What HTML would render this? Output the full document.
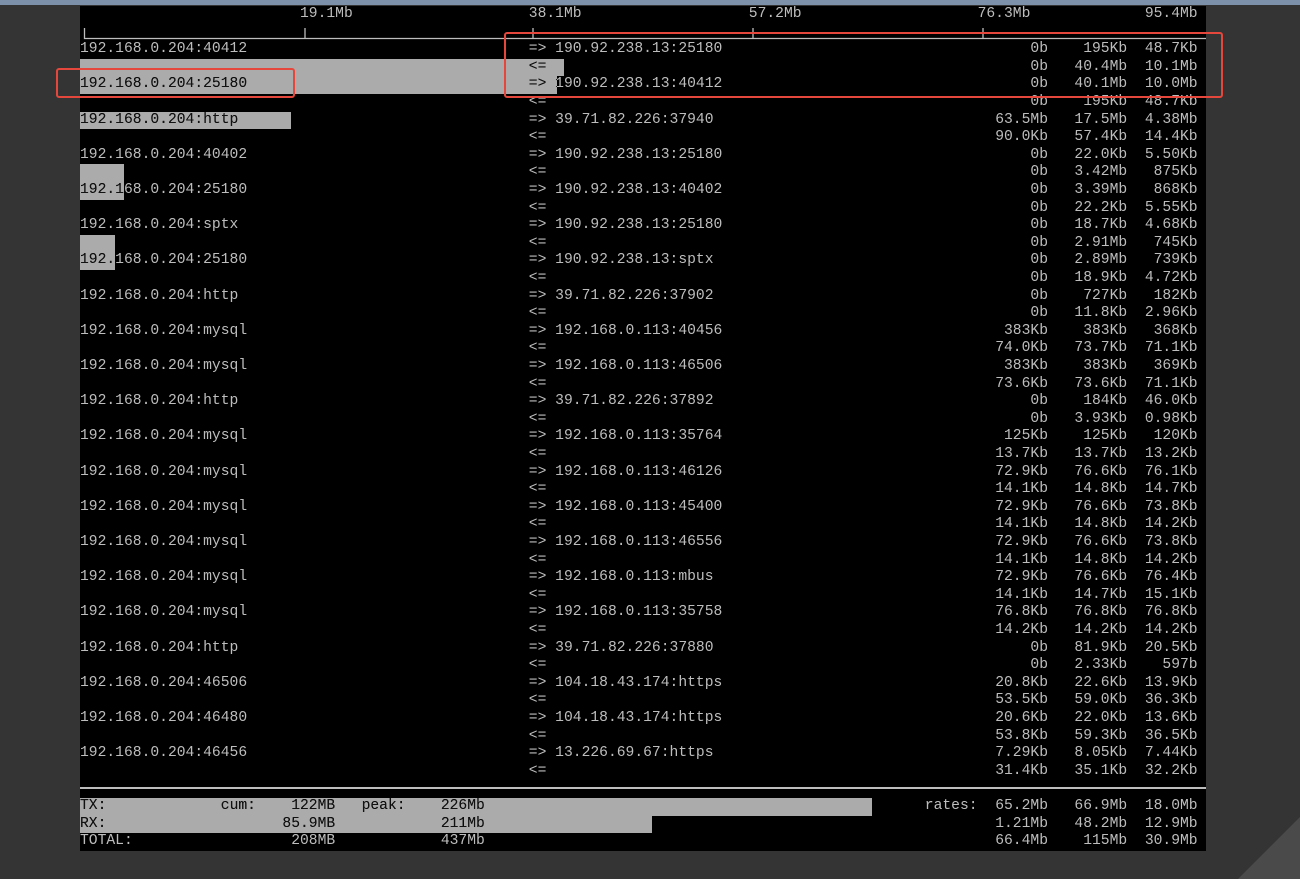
<!DOCTYPE html>
<html><head><meta charset="utf-8">
<style>
html,body{margin:0;padding:0;}
body{width:1300px;height:879px;background:#343434;position:relative;overflow:hidden;font-family:"Liberation Mono","DejaVu Sans Mono",monospace;}
#top{position:absolute;left:0;top:0;width:1300px;height:5px;background:#7d91ab;}
#t{position:absolute;left:80px;top:6px;width:1126.4px;height:845px;background:#000;isolation:isolate;overflow:hidden;}
.l{position:absolute;left:0;width:1126.4px;height:17.6px;font-size:14.67px;line-height:17.6px;color:#bdbdbd;white-space:pre;}
.l span{position:absolute;top:0;}
.h{left:0}
.a{left:448.8px}
.c1{right:158.4px}
.c2{right:79.2px}
.c3{right:8.8px}
.bar{position:absolute;left:0;height:17.6px;background:#ababab;mix-blend-mode:difference;}
.box{position:absolute;border:2px solid #e5473d;border-radius:3px;}
</style></head><body>
<div id="top"></div>
<svg style="position:absolute;right:0;bottom:0" width="70" height="70"><polygon points="70,8 70,70 8,70" fill="#4a4a4a"/></svg>
<div id="t">
<div class="l" style="top:0px"><span style="left:220px">19.1Mb</span><span style="left:448.8px">38.1Mb</span><span style="left:668.8px">57.2Mb</span><span style="left:897.6px">76.3Mb</span><span class="c3">95.4Mb</span></div>
<svg style="position:absolute;left:0;top:17.6px" width="1127" height="18"><path d="M4.5 4V14.5H1126 M225 4V14.5 M453 4V14.5 M673 4V14.5 M903 4V14.5" stroke="#bdbdbd" stroke-width="1.3" fill="none"/></svg>

<div class="l" style="top:35.2px"><span class="h">192.168.0.204:40412</span><span class="a">=&gt; 190.92.238.13:25180</span><span class="c1">0b</span><span class="c2">195Kb</span><span class="c3">48.7Kb</span></div>
<div class="l" style="top:52.8px"><span class="a">&lt;=</span><span class="c1">0b</span><span class="c2">40.4Mb</span><span class="c3">10.1Mb</span></div>
<div class="l" style="top:70.4px"><span class="h">192.168.0.204:25180</span><span class="a">=&gt; 190.92.238.13:40412</span><span class="c1">0b</span><span class="c2">40.1Mb</span><span class="c3">10.0Mb</span></div>
<div class="l" style="top:88px"><span class="a">&lt;=</span><span class="c1">0b</span><span class="c2">195Kb</span><span class="c3">48.7Kb</span></div>
<div class="l" style="top:105.6px"><span class="h">192.168.0.204:http</span><span class="a">=&gt; 39.71.82.226:37940</span><span class="c1">63.5Mb</span><span class="c2">17.5Mb</span><span class="c3">4.38Mb</span></div>
<div class="l" style="top:123.2px"><span class="a">&lt;=</span><span class="c1">90.0Kb</span><span class="c2">57.4Kb</span><span class="c3">14.4Kb</span></div>
<div class="l" style="top:140.8px"><span class="h">192.168.0.204:40402</span><span class="a">=&gt; 190.92.238.13:25180</span><span class="c1">0b</span><span class="c2">22.0Kb</span><span class="c3">5.50Kb</span></div>
<div class="l" style="top:158.4px"><span class="a">&lt;=</span><span class="c1">0b</span><span class="c2">3.42Mb</span><span class="c3">875Kb</span></div>
<div class="l" style="top:176px"><span class="h">192.168.0.204:25180</span><span class="a">=&gt; 190.92.238.13:40402</span><span class="c1">0b</span><span class="c2">3.39Mb</span><span class="c3">868Kb</span></div>
<div class="l" style="top:193.6px"><span class="a">&lt;=</span><span class="c1">0b</span><span class="c2">22.2Kb</span><span class="c3">5.55Kb</span></div>
<div class="l" style="top:211.2px"><span class="h">192.168.0.204:sptx</span><span class="a">=&gt; 190.92.238.13:25180</span><span class="c1">0b</span><span class="c2">18.7Kb</span><span class="c3">4.68Kb</span></div>
<div class="l" style="top:228.8px"><span class="a">&lt;=</span><span class="c1">0b</span><span class="c2">2.91Mb</span><span class="c3">745Kb</span></div>
<div class="l" style="top:246.4px"><span class="h">192.168.0.204:25180</span><span class="a">=&gt; 190.92.238.13:sptx</span><span class="c1">0b</span><span class="c2">2.89Mb</span><span class="c3">739Kb</span></div>
<div class="l" style="top:264px"><span class="a">&lt;=</span><span class="c1">0b</span><span class="c2">18.9Kb</span><span class="c3">4.72Kb</span></div>
<div class="l" style="top:281.6px"><span class="h">192.168.0.204:http</span><span class="a">=&gt; 39.71.82.226:37902</span><span class="c1">0b</span><span class="c2">727Kb</span><span class="c3">182Kb</span></div>
<div class="l" style="top:299.2px"><span class="a">&lt;=</span><span class="c1">0b</span><span class="c2">11.8Kb</span><span class="c3">2.96Kb</span></div>
<div class="l" style="top:316.8px"><span class="h">192.168.0.204:mysql</span><span class="a">=&gt; 192.168.0.113:40456</span><span class="c1">383Kb</span><span class="c2">383Kb</span><span class="c3">368Kb</span></div>
<div class="l" style="top:334.4px"><span class="a">&lt;=</span><span class="c1">74.0Kb</span><span class="c2">73.7Kb</span><span class="c3">71.1Kb</span></div>
<div class="l" style="top:352px"><span class="h">192.168.0.204:mysql</span><span class="a">=&gt; 192.168.0.113:46506</span><span class="c1">383Kb</span><span class="c2">383Kb</span><span class="c3">369Kb</span></div>
<div class="l" style="top:369.6px"><span class="a">&lt;=</span><span class="c1">73.6Kb</span><span class="c2">73.6Kb</span><span class="c3">71.1Kb</span></div>
<div class="l" style="top:387.2px"><span class="h">192.168.0.204:http</span><span class="a">=&gt; 39.71.82.226:37892</span><span class="c1">0b</span><span class="c2">184Kb</span><span class="c3">46.0Kb</span></div>
<div class="l" style="top:404.8px"><span class="a">&lt;=</span><span class="c1">0b</span><span class="c2">3.93Kb</span><span class="c3">0.98Kb</span></div>
<div class="l" style="top:422.4px"><span class="h">192.168.0.204:mysql</span><span class="a">=&gt; 192.168.0.113:35764</span><span class="c1">125Kb</span><span class="c2">125Kb</span><span class="c3">120Kb</span></div>
<div class="l" style="top:440px"><span class="a">&lt;=</span><span class="c1">13.7Kb</span><span class="c2">13.7Kb</span><span class="c3">13.2Kb</span></div>
<div class="l" style="top:457.6px"><span class="h">192.168.0.204:mysql</span><span class="a">=&gt; 192.168.0.113:46126</span><span class="c1">72.9Kb</span><span class="c2">76.6Kb</span><span class="c3">76.1Kb</span></div>
<div class="l" style="top:475.2px"><span class="a">&lt;=</span><span class="c1">14.1Kb</span><span class="c2">14.8Kb</span><span class="c3">14.7Kb</span></div>
<div class="l" style="top:492.8px"><span class="h">192.168.0.204:mysql</span><span class="a">=&gt; 192.168.0.113:45400</span><span class="c1">72.9Kb</span><span class="c2">76.6Kb</span><span class="c3">73.8Kb</span></div>
<div class="l" style="top:510.4px"><span class="a">&lt;=</span><span class="c1">14.1Kb</span><span class="c2">14.8Kb</span><span class="c3">14.2Kb</span></div>
<div class="l" style="top:528px"><span class="h">192.168.0.204:mysql</span><span class="a">=&gt; 192.168.0.113:46556</span><span class="c1">72.9Kb</span><span class="c2">76.6Kb</span><span class="c3">73.8Kb</span></div>
<div class="l" style="top:545.6px"><span class="a">&lt;=</span><span class="c1">14.1Kb</span><span class="c2">14.8Kb</span><span class="c3">14.2Kb</span></div>
<div class="l" style="top:563.2px"><span class="h">192.168.0.204:mysql</span><span class="a">=&gt; 192.168.0.113:mbus</span><span class="c1">72.9Kb</span><span class="c2">76.6Kb</span><span class="c3">76.4Kb</span></div>
<div class="l" style="top:580.8px"><span class="a">&lt;=</span><span class="c1">14.1Kb</span><span class="c2">14.7Kb</span><span class="c3">15.1Kb</span></div>
<div class="l" style="top:598.4px"><span class="h">192.168.0.204:mysql</span><span class="a">=&gt; 192.168.0.113:35758</span><span class="c1">76.8Kb</span><span class="c2">76.8Kb</span><span class="c3">76.8Kb</span></div>
<div class="l" style="top:616px"><span class="a">&lt;=</span><span class="c1">14.2Kb</span><span class="c2">14.2Kb</span><span class="c3">14.2Kb</span></div>
<div class="l" style="top:633.6px"><span class="h">192.168.0.204:http</span><span class="a">=&gt; 39.71.82.226:37880</span><span class="c1">0b</span><span class="c2">81.9Kb</span><span class="c3">20.5Kb</span></div>
<div class="l" style="top:651.2px"><span class="a">&lt;=</span><span class="c1">0b</span><span class="c2">2.33Kb</span><span class="c3">597b</span></div>
<div class="l" style="top:668.8px"><span class="h">192.168.0.204:46506</span><span class="a">=&gt; 104.18.43.174:https</span><span class="c1">20.8Kb</span><span class="c2">22.6Kb</span><span class="c3">13.9Kb</span></div>
<div class="l" style="top:686.4px"><span class="a">&lt;=</span><span class="c1">53.5Kb</span><span class="c2">59.0Kb</span><span class="c3">36.3Kb</span></div>
<div class="l" style="top:704px"><span class="h">192.168.0.204:46480</span><span class="a">=&gt; 104.18.43.174:https</span><span class="c1">20.6Kb</span><span class="c2">22.0Kb</span><span class="c3">13.6Kb</span></div>
<div class="l" style="top:721.6px"><span class="a">&lt;=</span><span class="c1">53.8Kb</span><span class="c2">59.3Kb</span><span class="c3">36.5Kb</span></div>
<div class="l" style="top:739.2px"><span class="h">192.168.0.204:46456</span><span class="a">=&gt; 13.226.69.67:https</span><span class="c1">7.29Kb</span><span class="c2">8.05Kb</span><span class="c3">7.44Kb</span></div>
<div class="l" style="top:756.8px"><span class="a">&lt;=</span><span class="c1">31.4Kb</span><span class="c2">35.1Kb</span><span class="c3">32.2Kb</span></div>

<div style="position:absolute;left:0;top:781px;width:1126.4px;height:1.5px;background:#bdbdbd"></div>

<div class="l" style="top:792px"><span class="h">TX:</span><span style="left:140.8px">cum:</span><span style="right:871.2px">122MB</span><span style="left:281.6px">peak:</span><span style="right:721.6px">226Mb</span><span style="left:844.8px">rates:</span><span class="c1">65.2Mb</span><span class="c2">66.9Mb</span><span class="c3">18.0Mb</span></div>
<div class="l" style="top:809.6px"><span class="h">RX:</span><span style="right:871.2px">85.9MB</span><span style="right:721.6px">211Mb</span><span class="c1">1.21Mb</span><span class="c2">48.2Mb</span><span class="c3">12.9Mb</span></div>
<div class="l" style="top:827.2px"><span class="h">TOTAL:</span><span style="right:871.2px">208MB</span><span style="right:721.6px">437Mb</span><span class="c1">66.4Mb</span><span class="c2">115Mb</span><span class="c3">30.9Mb</span></div>

<div class="bar" style="top:52.8px;width:484px"></div>
<div class="bar" style="top:70.4px;width:477px"></div>
<div class="bar" style="top:105.6px;width:211px"></div>
<div class="bar" style="top:158.4px;width:44px"></div>
<div class="bar" style="top:176px;width:44px"></div>
<div class="bar" style="top:228.8px;width:35px"></div>
<div class="bar" style="top:246.4px;width:35px"></div>
<div class="bar" style="top:792px;width:792px"></div>
<div class="bar" style="top:809.6px;width:572px"></div>
</div>
<div class="box" style="left:56px;top:68px;width:235px;height:26px"></div>
<div class="box" style="left:504px;top:32px;width:715px;height:62px"></div>
</body></html>
